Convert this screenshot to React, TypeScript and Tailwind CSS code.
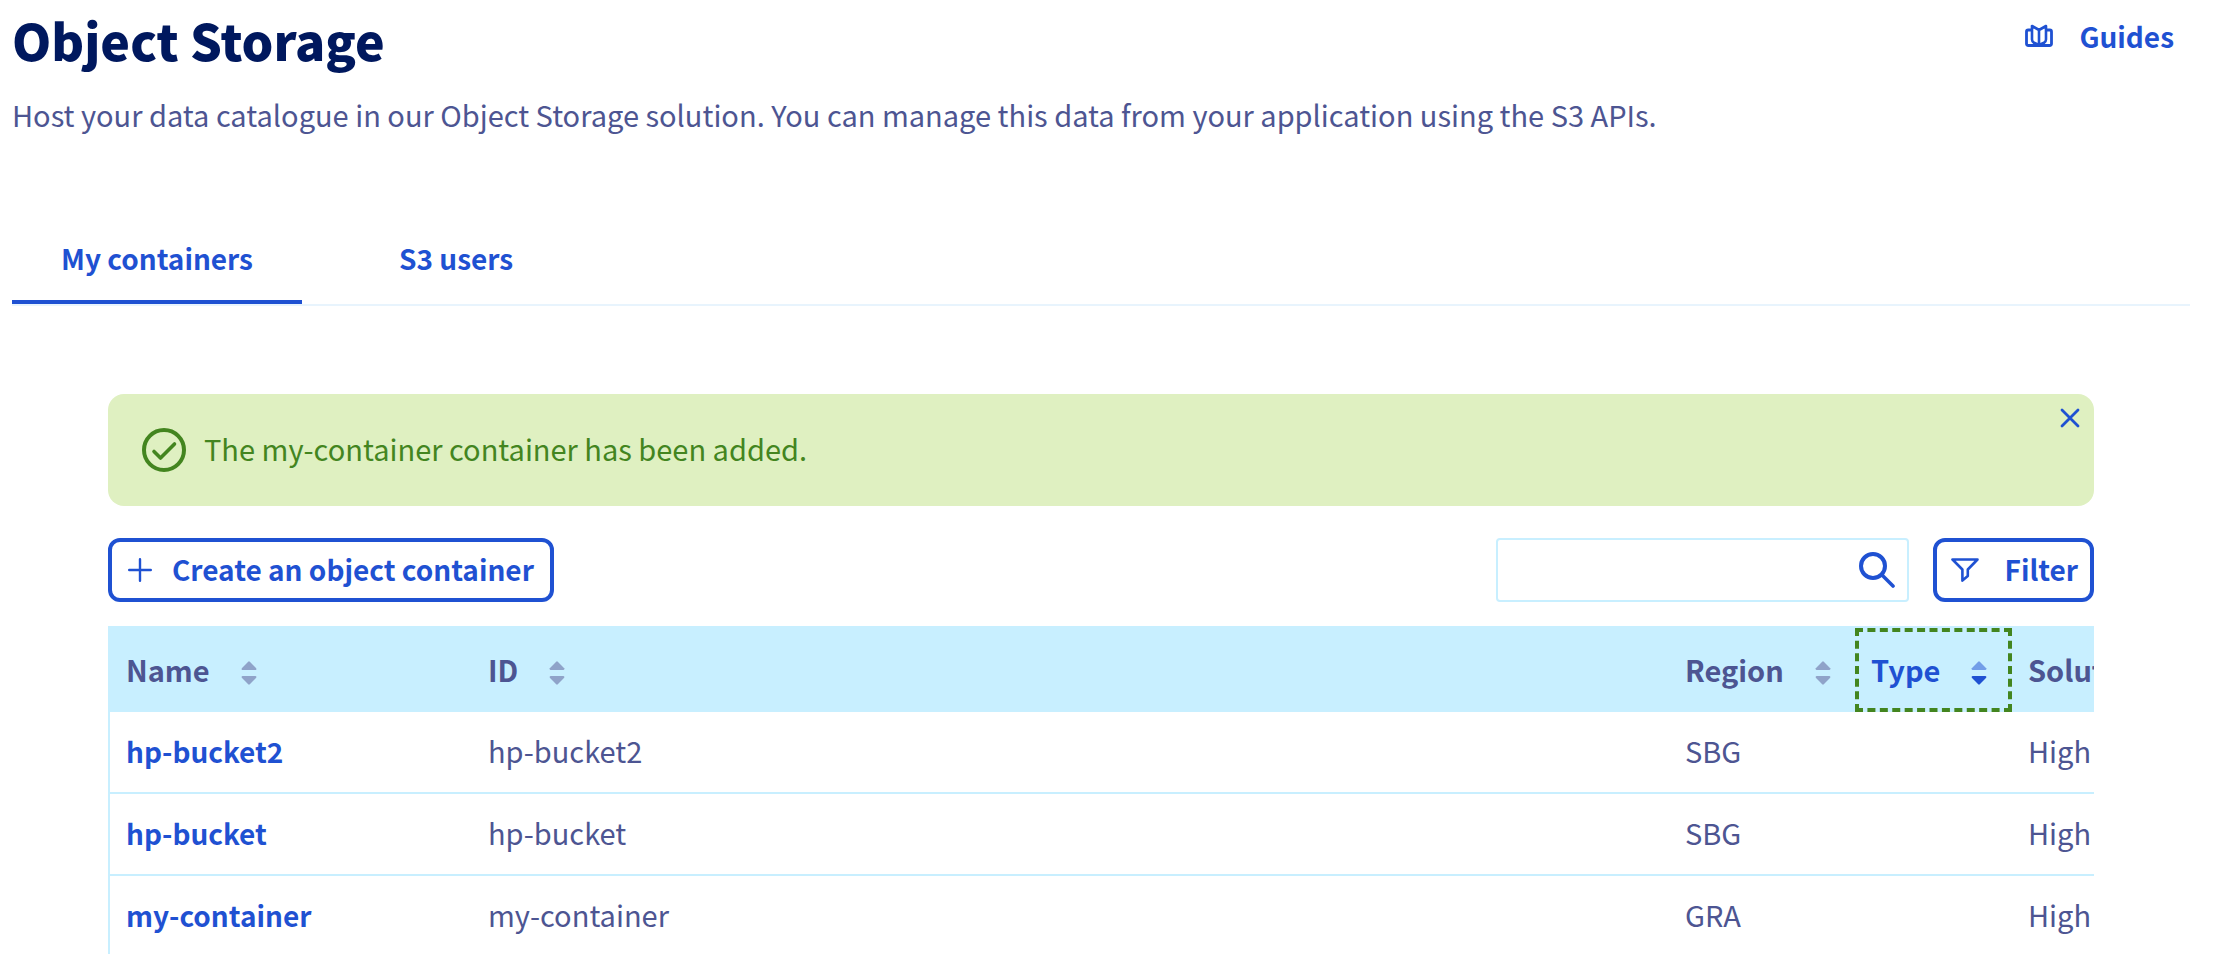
import { useState } from "react";

type SortState = "none" | "active";

function SortIcon({ state }: { state: SortState }) {
  const up = state === "active" ? "fill-[#739ee8]" : "fill-[#8fa3c9]";
  const down = state === "active" ? "fill-[#1f51d2]" : "fill-[#8fa3c9]";
  return (
    <svg className="mt-2 h-6 w-4" viewBox="0 0 16 24" aria-hidden="true">
      <path className={up} d="M7.2.7 Q8 0 8.8.7 L15.2 7.3 Q15.8 9 14.4 9 H1.6 Q.2 9 .8 7.3Z" />
      <path className={down} d="M7.2 23.3 Q8 24 8.8 23.3 L15.2 16.7 Q15.8 15 14.4 15 H1.6 Q.2 15 .8 16.7Z" />
    </svg>
  );
}

function GuidesIcon() {
  return (
    <svg className="h-6 w-7" viewBox="0 0 28 24" fill="none" stroke="currentColor" strokeWidth="2.8" strokeLinejoin="round" aria-hidden="true">
      <path d="M7 6H3.2Q1.5 6 1.5 7.7V19.8Q1.5 21.5 3.5 21.5H24.5Q26.5 21.5 26.5 19.8V7.7Q26.5 6 24.8 6H21" />
      <path strokeWidth="2.6" d="M14 6 7 2V15.5Q7 17.5 9 18.8L14 21 19 18.8Q21 17.5 21 15.5V2Z M14 6V21" />
    </svg>
  );
}

function CheckIcon() {
  return (
    <svg className="size-11" viewBox="0 0 44 44" fill="none" stroke="currentColor" strokeWidth="4" strokeLinecap="round" strokeLinejoin="round" aria-hidden="true">
      <circle cx="22" cy="22" r="20" />
      <path strokeWidth="3.6" d="M12 23.5 18.5 30 32.5 16" />
    </svg>
  );
}

function CloseIcon() {
  return (
    <svg className="size-5" viewBox="0 0 20 20" fill="none" stroke="currentColor" strokeWidth="2.8" strokeLinecap="round" aria-hidden="true">
      <path d="M2 2 18 18M18 2 2 18" />
    </svg>
  );
}

function PlusIcon() {
  return (
    <svg className="size-6" viewBox="0 0 24 24" fill="none" stroke="currentColor" strokeWidth="2.4" strokeLinecap="round" aria-hidden="true">
      <path d="M12 1.2V22.8M1.2 12H22.8" />
    </svg>
  );
}

function SearchIcon() {
  return (
    <svg className="size-9" viewBox="0 0 36 36" fill="none" stroke="currentColor" strokeWidth="4" strokeLinecap="round" aria-hidden="true">
      <circle cx="14" cy="14" r="12" />
      <path strokeWidth="3.6" d="M23 23 34 34" />
    </svg>
  );
}

function FilterIcon() {
  return (
    <svg className="h-6 w-7" viewBox="0 0 28 24" fill="none" stroke="currentColor" strokeWidth="2.6" strokeLinejoin="round" aria-hidden="true">
      <path d="M1.5 1.5H26.5L16.8 11.5V18L11.4 22.6V11.5Z" />
    </svg>
  );
}

const containers = [
  { name: "hp-bucket2", region: "SBG", type: "", solution: "High Performance" },
  { name: "hp-bucket", region: "SBG", type: "", solution: "High Performance" },
  { name: "my-container", region: "GRA", type: "", solution: "High Performance" },
];

const tabs = ["My containers", "S3 users"];

const actionClass = "text-[28px] leading-10 font-bold text-[#1f51d2]";
const thClass = "h-[86px] px-4 text-left font-bold whitespace-nowrap";
const tdClass = "h-[82px] border-b-2 border-[#c8efff] px-4 pb-1 whitespace-nowrap";

export default function App() {
  const [tab, setTab] = useState(tabs[0]);
  const [notice, setNotice] = useState(true);

  return (
    <main className="h-screen overflow-hidden bg-white pt-2 pr-6 pl-3 font-['Noto_Sans_CJK_SC','Noto_Sans',sans-serif] text-[29px] leading-10 text-[#4d5592]">
      <header className="flex items-start justify-between">
        <div>
          <h1 className="text-[50px] leading-[62px] font-black text-[#00185e]">Object Storage</h1>
          <p className="mt-6">
            Host your data catalogue in our Object Storage solution. You can manage this data from your application using the S3 APIs.
          </p>
        </div>
        <a href="#guides" className={`mt-2 mr-4 flex items-center gap-[26px] ${actionClass}`}>
          <GuidesIcon />
          Guides
        </a>
      </header>

      <nav className="mt-[104px] flex gap-12 border-b-2 border-[#e8f4fd]" role="tablist">
        {tabs.map((t) => (
          <button
            key={t}
            type="button"
            role="tab"
            aria-selected={t === tab}
            onClick={() => setTab(t)}
            className={`border-b-4 px-[49px] pb-[22px] ${actionClass} ${t === tab ? "border-[#1f51d2]" : "border-transparent"}`}
          >
            {t}
          </button>
        ))}
      </nav>

      <section className="mt-[88px] mr-24 ml-24">
        {notice && (
          <div role="status" className="relative mb-8 flex h-28 items-center gap-[18px] rounded-2xl bg-[#dff0c1] px-[34px] text-[#43851f]">
            <CheckIcon />
            <p className="pb-1">The my-container container has been added.</p>
            <button type="button" aria-label="Close" onClick={() => setNotice(false)} className="absolute top-[14px] right-[14px] text-[#1f51d2]">
              <CloseIcon />
            </button>
          </div>
        )}

        <div className="flex items-center justify-between">
          <button type="button" className={`flex h-16 items-center gap-5 rounded-xl border-4 border-[#1f51d2] px-4 ${actionClass}`}>
            <PlusIcon />
            <span className="pb-0.5">Create an object container</span>
          </button>
          <div className="flex gap-6">
            <div className="flex h-16 w-[413px] items-center rounded-sm border-2 border-[#c8efff] pr-3 text-[#1f51d2]">
              <input type="search" aria-label="Search containers" className="min-w-0 flex-1 px-4 outline-none" />
              <button type="button" aria-label="Search">
                <SearchIcon />
              </button>
            </div>
            <button type="button" className={`flex h-16 items-center gap-[26px] rounded-xl border-4 border-[#1f51d2] pr-3 pl-3.5 ${actionClass}`}>
              <FilterIcon />
              <span className="pb-0.5">Filter</span>
            </button>
          </div>
        </div>

        <div className="mt-6 overflow-hidden border-l-2 border-[#c8efff]">
          <table className="w-full table-fixed border-separate border-spacing-0">
            <colgroup>
              <col className="w-[362px]" />
              <col />
              <col className="w-[186px]" />
              <col className="w-[157px]" />
              <col className="w-[82px]" />
            </colgroup>
            <thead className="bg-[#c8efff]">
              <tr>
                <th className={thClass}>
                  <button type="button" className="flex items-center gap-[31px]">Name <SortIcon state="none" /></button>
                </th>
                <th className={thClass}>
                  <button type="button" className="flex items-center gap-[31px]">ID <SortIcon state="none" /></button>
                </th>
                <th className={thClass}>
                  <button type="button" className="flex items-center gap-[31px]">Region <SortIcon state="none" /></button>
                </th>
                <th className="h-[86px] pt-0.5">
                  <button type="button" className="flex h-[84px] w-full items-center gap-[31px] border-4 border-dashed border-[#43851f] px-3 pb-0.5 text-left font-bold text-[#1f51d2]">
                    Type <SortIcon state="active" />
                  </button>
                </th>
                <th className={`${thClass} overflow-hidden`}>Solution</th>
              </tr>
            </thead>
            <tbody>
              {containers.map((c) => (
                <tr key={c.name}>
                  <td className={tdClass}>
                    <a href={`#${c.name}`} className={actionClass}>{c.name}</a>
                  </td>
                  <td className={tdClass}>{c.name}</td>
                  <td className={tdClass}>{c.region}</td>
                  <td className={tdClass}>{c.type}</td>
                  <td className={`${tdClass} overflow-hidden`}>{c.solution}</td>
                </tr>
              ))}
            </tbody>
          </table>
        </div>
      </section>
    </main>
  );
}
